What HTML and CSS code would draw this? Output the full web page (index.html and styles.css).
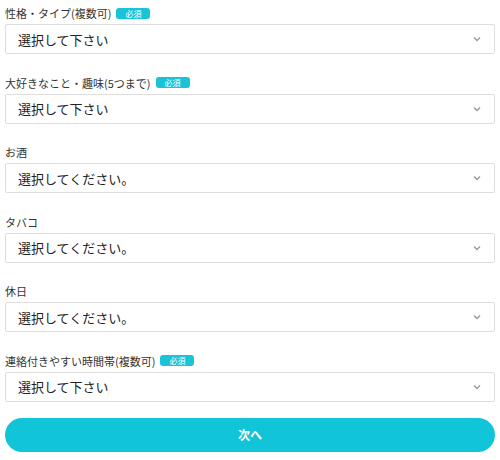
FILE: index.html
```html
<!DOCTYPE html>
<html lang="ja">
<head>
    <meta charset="UTF-8">
    <meta name="viewport" content="width=device-width, initial-scale=1.0">
    <title>プロフィール入力</title>
    <link rel="stylesheet" href="styles.css">
</head>
<body>

    <form class="formulario">
        <div class="campos">
            <div class="grupo">
                <div class="etiqueta">性格・タイプ(複数可)<span class="requerido">必須</span></div>
                <div class="selector"><span>選択して下さい</span><svg width="8" height="6" viewBox="0 0 8 6"><polyline points="1,1.5 4,4.5 7,1.5" fill="none" stroke="#9a9a9a" stroke-width="1.4"/></svg></div>
            </div>
            <div class="grupo">
                <div class="etiqueta">大好きなこと・趣味(5つまで)<span class="requerido">必須</span></div>
                <div class="selector"><span>選択して下さい</span><svg width="8" height="6" viewBox="0 0 8 6"><polyline points="1,1.5 4,4.5 7,1.5" fill="none" stroke="#9a9a9a" stroke-width="1.4"/></svg></div>
            </div>
            <div class="grupo">
                <div class="etiqueta">お酒</div>
                <div class="selector"><span>選択してください。</span><svg width="8" height="6" viewBox="0 0 8 6"><polyline points="1,1.5 4,4.5 7,1.5" fill="none" stroke="#9a9a9a" stroke-width="1.4"/></svg></div>
            </div>
            <div class="grupo">
                <div class="etiqueta">タバコ</div>
                <div class="selector"><span>選択してください。</span><svg width="8" height="6" viewBox="0 0 8 6"><polyline points="1,1.5 4,4.5 7,1.5" fill="none" stroke="#9a9a9a" stroke-width="1.4"/></svg></div>
            </div>
            <div class="grupo">
                <div class="etiqueta">休日</div>
                <div class="selector"><span>選択してください。</span><svg width="8" height="6" viewBox="0 0 8 6"><polyline points="1,1.5 4,4.5 7,1.5" fill="none" stroke="#9a9a9a" stroke-width="1.4"/></svg></div>
            </div>
            <div class="grupo">
                <div class="etiqueta">連絡付きやすい時間帯(複数可)<span class="requerido">必須</span></div>
                <div class="selector"><span>選択して下さい</span><svg width="8" height="6" viewBox="0 0 8 6"><polyline points="1,1.5 4,4.5 7,1.5" fill="none" stroke="#9a9a9a" stroke-width="1.4"/></svg></div>
            </div>
        </div>
        <button type="button" class="siguiente">次へ</button>
    </form>

</body>
</html>
```

FILE: styles.css
```css
body {
    font-family: "Noto Sans CJK JP", "Noto Sans", sans-serif;
    background-color: #fff;
    color: #333;
    margin: 0;
}

.formulario {
    padding: 2px 5px 0;
}

.campos {
    display: flex;
    flex-direction: column;
    gap: 17.6px;
}

.etiqueta {
    display: flex;
    align-items: center;
    height: 22px;
    font-size: 11px;
    color: #333;
}

.requerido {
    display: inline-block;
    margin-left: 5px;
    padding: 0 9px;
    height: 11px;
    line-height: 11px;
    font-size: 8px;
    color: #fff;
    background: #1bc3d7;
    border-radius: 3px;
}

.selector {
    display: flex;
    justify-content: space-between;
    align-items: center;
    box-sizing: border-box;
    height: 30px;
    padding: 0 13px 0 12px;
    border: 1px solid #dedede;
    border-radius: 2px;
    font-size: 13px;
    color: #222;
}

.siguiente {
    display: block;
    width: 100%;
    height: 34px;
    margin-top: 16px;
    border: none;
    border-radius: 17px;
    background: #12c4d8;
    color: #fff;
    font-family: inherit;
    font-size: 12px;
    font-weight: bold;
    cursor: pointer;
}
```
